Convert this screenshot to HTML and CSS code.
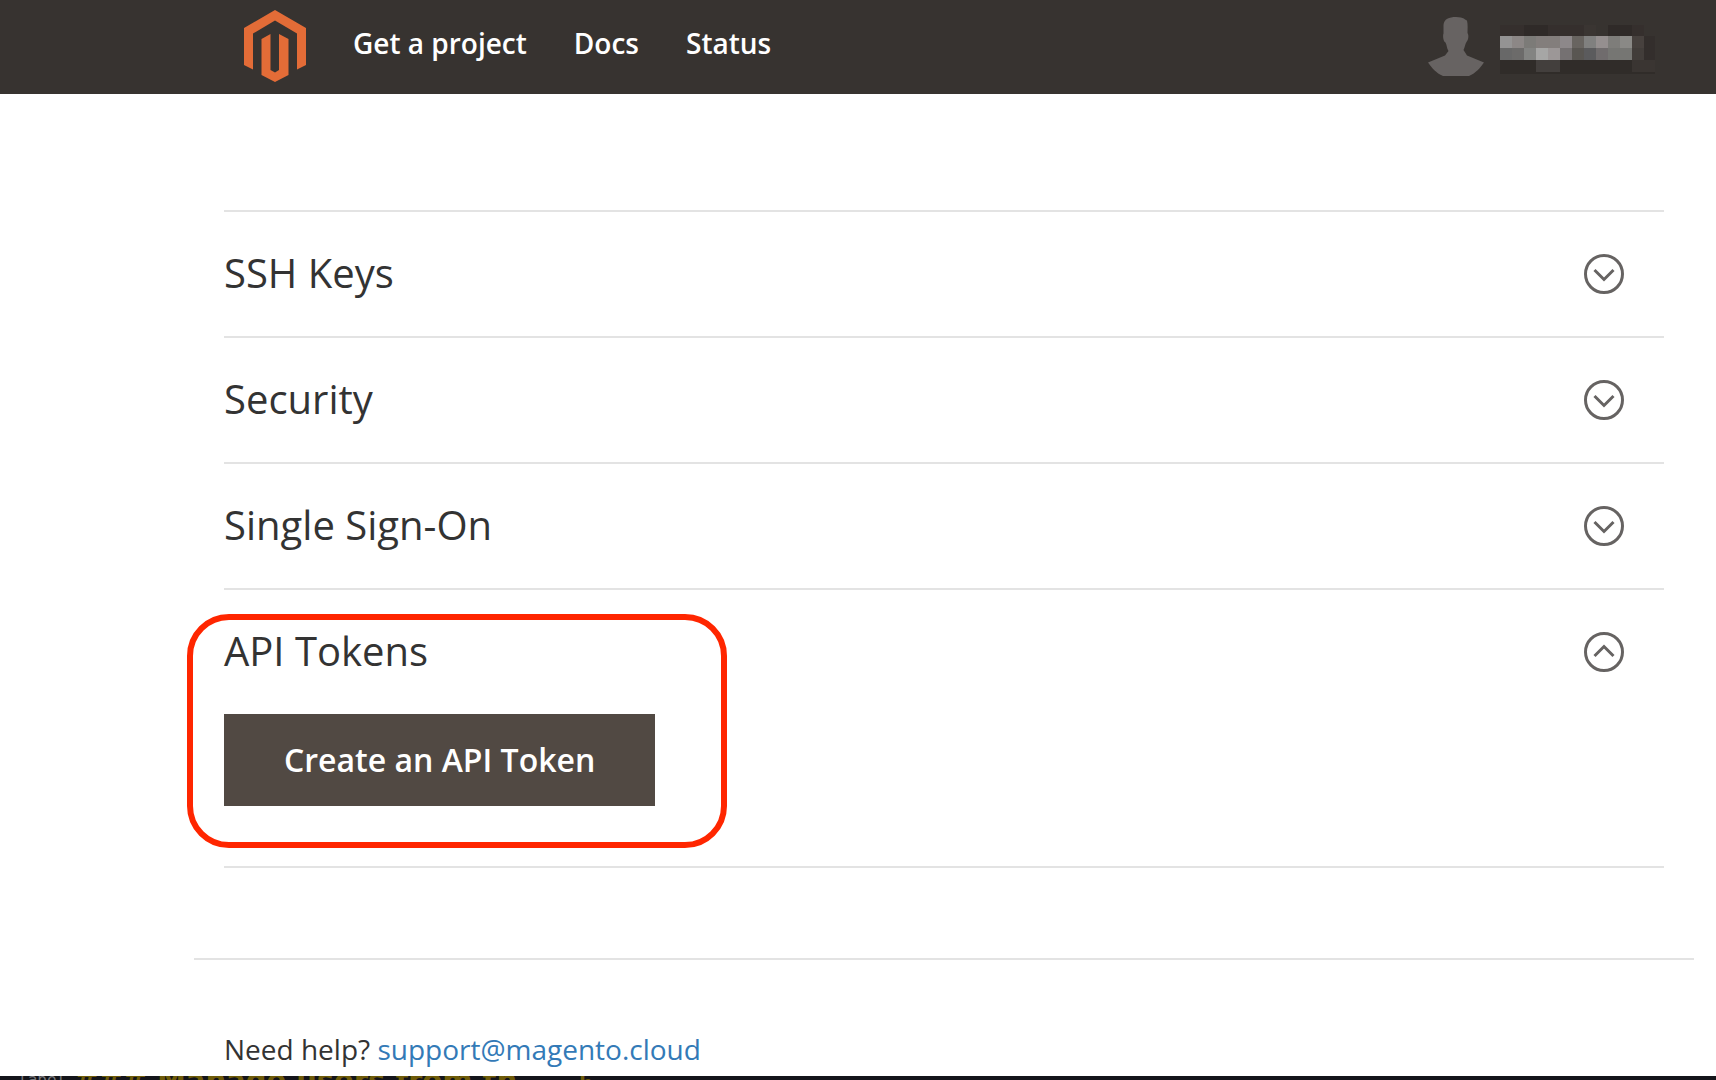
FILE: index.html
```html
<!DOCTYPE html>
<html lang="en">
<head>
<meta charset="utf-8">
<title>Account settings</title>
<link rel="stylesheet" href="styles.css">
</head>
<body>
<header class="topbar">
  <a class="logo" href="#" aria-label="Magento">
    <svg width="62" height="72" viewBox="0 0 62 72" fill="#e36c37"><path d="M31 0 62 18V55L53 59.500V23.500L31 10.500 9 23.500V59.500L0 55V18Z"/><path d="M17.500 29 26.500 24V60L31 62.500 35 60V24L44.500 29V65L31 72 17.500 65Z"/></svg>
  </a>
  <nav class="nav">
    <a href="#">Get a project</a>
    <a href="#">Docs</a>
    <a href="#">Status</a>
  </nav>
  <a class="account" href="#" aria-label="Account">
    <svg width="56" height="60" viewBox="0 0 56 60" fill="#676362"><path d="M28 1C36 1 37 4 39 4.500 40 9 39.500 13 39.500 17 41 19 40.500 24 38.500 26 37 28 37 31 35.500 34L39 39.500 56 46.500C52 52 48 57 41 60H15C8 57 4 52 0 46.500L17 39.500 20.500 35C18.500 32 19 29 17.500 26.500 15.500 26 14.500 20 15.500 17.500V9C16 3 21 1 28 1Z"/></svg>
    <svg width="156" height="55" viewBox="0 -6 156 55" shape-rendering="crispEdges">
      <path fill="#302c29" d="M0 35h155v14H0z"/>
      <path fill="#352f2d" d="M0 0h24v11H0zM48 0h36v11H48zM132 0h12v11h-12zM36 35h24v12H36z"/>
      <path fill="#2f2a28" d="M24 0h12v11H24zM36 0h12v11H36zM108 0h24v11h-24z"/>
      <path fill="#3a3532" d="M84 0h12v11H84zM132 35h23v12h-23z"/>
      <path fill="#433f3d" d="M36 35h24v12H36z"/>
      <path fill="#949393" d="M0 11h12v12H0z"/><path fill="#8c8786" d="M12 11h12v12H12z"/><path fill="#7c7b78" d="M24 11h12v12H24z"/><path fill="#837e7c" d="M36 11h24v12H36z"/><path fill="#8d888a" d="M60 11h12v12H60z"/><path fill="#686460" d="M72 11h12v12H72z"/><path fill="#80807f" d="M84 11h12v12H84z"/><path fill="#958f8f" d="M96 11h12v12H96z"/><path fill="#7e7d7a" d="M108 11h12v12h-12z"/><path fill="#8a8986" d="M120 11h12v12h-12z"/><path fill="#47413e" d="M132 11h12v12h-12z"/><path fill="#332e2c" d="M144 11h11v24h-11z"/>
      <path fill="#686868" d="M0 23h12v12H0z"/><path fill="#6c6b6a" d="M12 23h12v12H12z"/><path fill="#838482" d="M24 23h12v12H24z"/><path fill="#a6a6a5" d="M36 23h12v12H36z"/><path fill="#9c9797" d="M48 23h12v12H48z"/><path fill="#757172" d="M60 23h12v12H60z"/><path fill="#595652" d="M72 23h12v12H72z"/><path fill="#5b5b5d" d="M84 23h12v12H84z"/><path fill="#706c6d" d="M96 23h12v12H96z"/><path fill="#767673" d="M108 23h24v12h-24z"/><path fill="#423d3a" d="M132 23h12v12h-12z"/>
    </svg>
  </a>
</header>
<main class="content">
  <section class="panel">
    <h2><button class="toggle" type="button" aria-expanded="false"><span>SSH Keys</span><svg class="chevron" viewBox="0 0 40 40"><circle cx="20" cy="20" r="18.500"/><path d="M10.500 16 20 25.500 29.500 16"/></svg></button></h2>
  </section>
  <section class="panel">
    <h2><button class="toggle" type="button" aria-expanded="false"><span>Security</span><svg class="chevron" viewBox="0 0 40 40"><circle cx="20" cy="20" r="18.500"/><path d="M10.500 16 20 25.500 29.500 16"/></svg></button></h2>
  </section>
  <section class="panel">
    <h2><button class="toggle" type="button" aria-expanded="false"><span>Single Sign-On</span><svg class="chevron" viewBox="0 0 40 40"><circle cx="20" cy="20" r="18.500"/><path d="M10.500 16 20 25.500 29.500 16"/></svg></button></h2>
  </section>
  <section class="panel panel-open">
    <h2><button class="toggle" type="button" aria-expanded="true"><span>API Tokens</span><svg class="chevron" viewBox="0 0 40 40"><circle cx="20" cy="20" r="18.500"/><path d="M10.500 24 20 14.500 29.500 24"/></svg></button></h2>
    <button class="create" type="button">Create an API Token</button>
    <div class="highlight"></div>
  </section>
</main>
<footer class="help">Need help? <a href="#">support@magento.cloud</a></footer>
<div class="backdrop"><span class="backdrop-label">label</span><span class="backdrop-title">### Manage users from th</span><span class="backdrop-mark">h</span></div>
</body>
</html>
```
FILE: styles.css
```css
* { box-sizing: border-box; }

body {
  margin: 0;
  min-height: 100vh;
  display: flex;
  flex-direction: column;
  background: #fff;
  color: #333;
  font-family: "Open Sans", sans-serif;
}

a { text-decoration: none; }
svg { display: block; flex: none; }

.topbar {
  display: flex;
  align-items: center;
  height: 94px;
  padding: 0 60px 2px 244px;
  background: #373330;
}

.nav {
  display: flex;
  gap: 47px;
  margin-left: 47px;
  padding-bottom: 6px;
}

.nav a {
  color: #fff;
  font-size: 28px;
  font-weight: 600;
  line-height: 40px;
}

.account {
  display: flex;
  align-items: center;
  gap: 16px;
  margin-left: auto;
}

.content {
  margin: 116px 52px 0 224px;
  border-bottom: 2px solid #e3e3e3;
}

.panel {
  position: relative;
  border-top: 2px solid #e3e3e3;
}

.panel-open { padding-bottom: 60px; }

h2 { margin: 0; }

.toggle {
  display: flex;
  align-items: center;
  justify-content: space-between;
  width: 100%;
  height: 124px;
  padding: 0 40px 0 0;
  border: 0;
  background: none;
  color: #333;
  font: 400 40px/56px "Open Sans", sans-serif;
  text-align: left;
}

.toggle span { padding-bottom: 2px; }

.chevron {
  width: 40px;
  height: 40px;
  fill: none;
  stroke: #666362;
  stroke-width: 3;
}

.create {
  display: block;
  height: 92px;
  padding: 0 60px;
  border: 0;
  background: #514943;
  color: #fff;
  font: 600 32px/44px "Open Sans", sans-serif;
}

.highlight {
  position: absolute;
  top: 24px;
  left: -37px;
  width: 540px;
  height: 234px;
  border: 6px solid #ff2600;
  border-radius: 42px;
  pointer-events: none;
}

.help {
  margin: 90px 22px 0 194px;
  padding: 69px 30px 0;
  border-top: 2px solid #e3e3e3;
  font-size: 28px;
  line-height: 40px;
}

.help a { color: #337ab7; }

.backdrop {
  display: flex;
  height: 4px;
  margin-top: auto;
  padding-left: 18px;
  overflow: hidden;
  background: #14151a;
  color: #6e5b08;
  white-space: nowrap;
}

.backdrop-label {
  width: 56px;
  color: #77787c;
  font: 16px/8px "DejaVu Sans Mono", monospace;
}

.backdrop-title {
  width: 505px;
  font: 700 29px/8px "DejaVu Sans", sans-serif;
}

.backdrop-mark { font: 700 20px/14px "DejaVu Sans", sans-serif; }
```
